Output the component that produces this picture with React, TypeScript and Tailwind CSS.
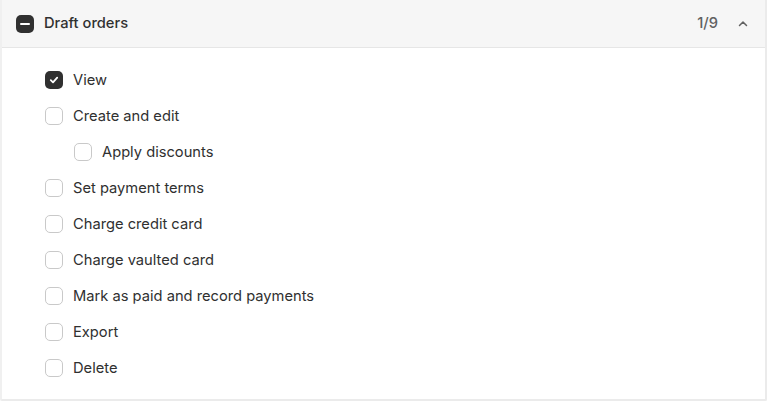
import React from "react";

const items: { label: string; checked?: boolean; indent?: boolean }[] = [
  { label: "View", checked: true },
  { label: "Create and edit" },
  { label: "Apply discounts", indent: true },
  { label: "Set payment terms" },
  { label: "Charge credit card" },
  { label: "Charge vaulted card" },
  { label: "Mark as paid and record payments" },
  { label: "Export" },
  { label: "Delete" },
];

function Box({ checked }: { checked?: boolean }) {
  if (checked) {
    return (
      <span className="flex h-[18px] w-[18px] items-center justify-center rounded-[5px] bg-[#303030]">
        <svg width="12" height="12" viewBox="0 0 12 12" fill="none">
          <path d="M2.8 6.2 L5 8.3 L9.2 3.6" stroke="white" strokeWidth="1.8" strokeLinecap="round" strokeLinejoin="round" />
        </svg>
      </span>
    );
  }
  return <span className="block h-[18px] w-[18px] rounded-[5px] border border-[#c9c9c9] bg-white" />;
}

export default function App() {
  return (
    <div className="h-[402px] w-[768px] bg-white" style={{ fontFamily: "Inter, 'Noto Sans', sans-serif" }}>
      <div className="h-[401px] w-[767px] overflow-hidden rounded-b-[2px] border-x-2 border-b-2 border-[#ebebeb] border-l-[#f0f0f0]">
        <div className="flex h-[48px] items-center border-b border-[#e6e6e6] bg-[#f6f6f6] pl-[14px] pr-[15px]">
          <span className="flex h-[18px] w-[18px] items-center justify-center rounded-[5px] bg-[#303030]">
            <span className="block h-[2px] w-[10px] rounded bg-white" />
          </span>
          <span className="ml-[10px] text-[14.7px] font-medium text-[#303030]">Draft orders</span>
          <span className="ml-auto text-[14.7px] font-medium text-[#616161]">1/9</span>
          <svg className="ml-[18px]" width="14" height="14" viewBox="0 0 14 14" fill="none">
            <path d="M3.5 8.5 L7 5 L10.5 8.5" stroke="#616161" strokeWidth="1.5" strokeLinecap="round" strokeLinejoin="round" />
          </svg>
        </div>
        <div className="flex flex-col pt-[14px]">
          {items.map((it) => (
            <div
              key={it.label}
              className={`flex h-[36px] items-center ${it.indent ? "pl-[72px]" : "pl-[43px]"}`}
            >
              <Box checked={it.checked} />
              <span className="ml-[10px] text-[14.7px] text-[#303030]">{it.label}</span>
            </div>
          ))}
        </div>
      </div>
    </div>
  );
}
